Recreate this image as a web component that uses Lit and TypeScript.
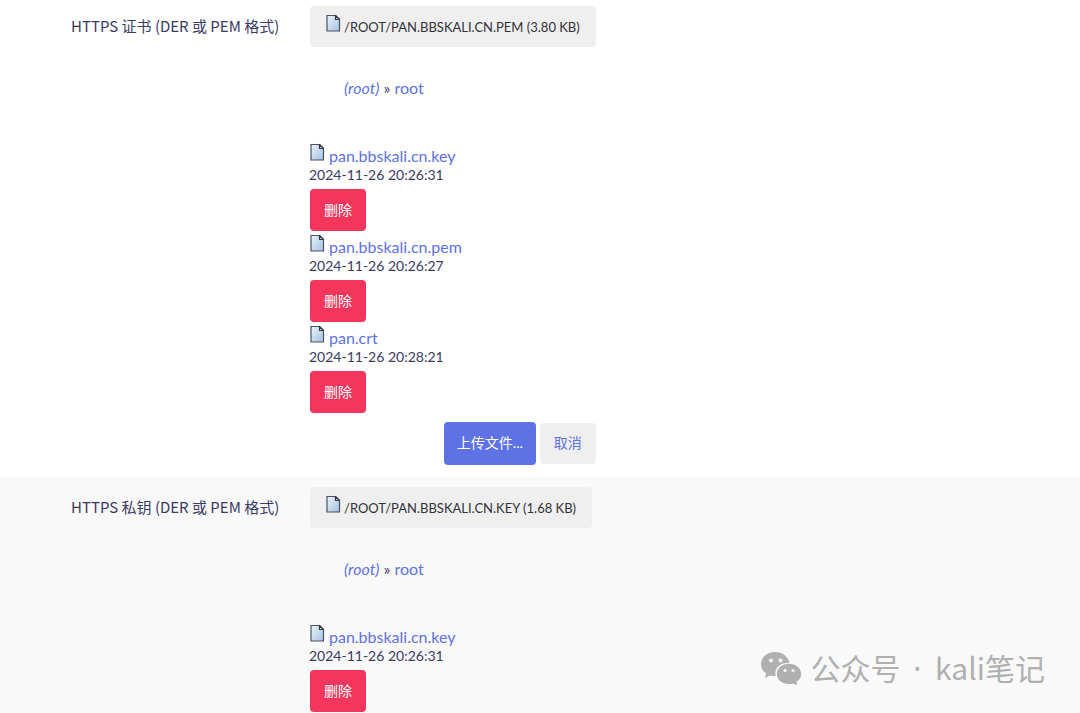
import { LitElement, html, css } from "lit";
import { customElement, property } from "lit/decorators.js";

interface FileEntry {
  name: string;
  date: string;
}

const fileIcon = html`
  <svg class="icon" viewBox="0 0 15 18" width="15" height="18" aria-hidden="true">
    <defs>
      <linearGradient id="paper" x1="0" y1="0" x2="1" y2="1">
        <stop offset="0" stop-color="#eaf3fb" />
        <stop offset="0.5" stop-color="#c8dbee" />
        <stop offset="1" stop-color="#a3bfe2" />
      </linearGradient>
    </defs>
    <path d="M1 1.500H9.500L13.500 5.500V17H1Z" fill="url(#paper)" stroke="#4a535e" stroke-width="1.200" />
    <path d="M9.500 1.500V5.500H13.500Z" fill="#dde6ee" stroke="#323a42" stroke-width="1.200" stroke-linejoin="round" />
  </svg>
`;

@customElement("file-field")
export class FileField extends LitElement {
  @property() label = "";
  @property() selected = "";
  @property({ attribute: false }) files: FileEntry[] = [];
  @property({ type: Boolean }) upload = false;

  static styles = css`
    :host {
      display: grid;
      grid-template-columns: 238px minmax(0, 1fr);
      padding: 10px 20px 12px 71px;
      color: #3a3a63;
      font-size: 14px;
      line-height: 18px;
    }
    .label {
      padding-top: 11px;
      font-family: "Noto Sans CJK SC", sans-serif;
      font-size: 15px;
    }
    .browser {
      width: fit-content;
    }
    button {
      font: inherit;
      font-size: 14px;
      line-height: 19px;
      border: 0;
      border-radius: 4px;
      padding: 11px 14px 12px;
      cursor: pointer;
    }
    .icon {
      display: block;
      flex: none;
    }
    .current {
      display: flex;
      align-items: flex-start;
      gap: 3px;
      height: 41px;
      margin-left: 1px;
      padding: 8px 16px 0;
      background: #efefef;
      color: #32323a;
      font-size: 13px;
      text-transform: uppercase;
      line-height: 26px;
    }
    .path {
      margin: 32px 0 46px 35px;
      font-size: 16px;
    }
    a {
      color: #5e72e4;
      text-decoration: none;
      font-size: 16px;
    }
    ul {
      list-style: none;
      margin: 0;
      padding: 0;
    }
    li {
      height: 91px;
    }
    .name {
      display: flex;
      align-items: flex-start;
      gap: 4px;
      height: 23px;
      margin-left: 1px;
      line-height: 25px;
    }
    time {
      display: block;
    }
    .delete {
      margin: 5px 0 0 1px;
      background: #f5365c;
      color: #fff;
    }
    .actions {
      display: flex;
      justify-content: flex-end;
      align-items: center;
      gap: 4px;
      margin-top: 6px;
    }
    .primary {
      padding: 11px 13px 13px;
      background: #5e72e4;
      color: #fff;
    }
    .cancel {
      padding: 10px 14px 12px;
      background: #efefef;
      color: #5e72e4;
    }
  `;

  render() {
    return html`
      <label class="label" for="current">${this.label}</label>
      <div class="browser">
        <button class="current" id="current" type="button">
          ${fileIcon}<span>${this.selected}</span>
        </button>
        <nav class="path"><a href="#"><em>(root)</em></a> » <a href="#">root</a></nav>
        <ul>
          ${this.files.map(
            (file) => html`
              <li>
                <div class="name">${fileIcon}<a href="#">${file.name}</a></div>
                <time>${file.date}</time>
                <button class="delete" type="button">删除</button>
              </li>
            `
          )}
        </ul>
        ${this.upload
          ? html`<div class="actions">
              <button class="primary" type="button">上传文件...</button>
              <button class="cancel" type="button">取消</button>
            </div>`
          : null}
      </div>
    `;
  }
}

@customElement("app-root")
export class AppRoot extends LitElement {
  static styles = css`
    :host {
      display: block;
      position: relative;
      height: 100vh;
      overflow: hidden;
      background: #fff;
      font-family: Lato, "Noto Sans CJK SC", sans-serif;
    }
    .first {
      padding-top: 6px;
    }
    .alternate {
      min-height: 100vh;
      background: #f9f9f9;
      grid-template-rows: max-content;
    }
    .watermark {
      position: absolute;
      right: 35px;
      bottom: 23px;
      display: flex;
      align-items: center;
      gap: 8px;
      color: #b0b0b0;
      font-family: "Noto Sans CJK SC", sans-serif;
      font-size: 30px;
      line-height: 42px;
    }
    .dot {
      margin: 0 6px 0 5px;
      font-family: "Noto Sans", sans-serif;
    }
  `;

  private certificates: FileEntry[] = [
    { name: "pan.bbskali.cn.key", date: "2024-11-26 20:26:31" },
    { name: "pan.bbskali.cn.pem", date: "2024-11-26 20:26:27" },
    { name: "pan.crt", date: "2024-11-26 20:28:21" },
  ];

  render() {
    return html`
      <file-field
        class="first"
        label="HTTPS 证书 (DER 或 PEM 格式)"
        selected="/root/pan.bbskali.cn.pem (3.80 KB)"
        .files=${this.certificates}
        upload
      ></file-field>
      <file-field
        class="alternate"
        label="HTTPS 私钥 (DER 或 PEM 格式)"
        selected="/root/pan.bbskali.cn.key (1.68 KB)"
        .files=${this.certificates.slice(0, 1)}
      ></file-field>
      <div class="watermark">
        <svg viewBox="0 0 42 34" width="42" height="34" fill="#b0b0b0" aria-hidden="true">
          <path d="M15 1C6.800 1 1 6.400 1 13c0 4 2 7.300 5.300 9.500L5 27l5-2.600c1.800.5 3.600.8 5.700.7A11.500 11.500 0 0 1 15.400 22C15.400 16 21 11.500 29.500 11.800 28.200 5.600 22.500 1 15 1Z" />
          <path d="M29 12.800c-7 0-12.200 4.500-12.200 10.200S22 33 29 33c1.600 0 3-.2 4.300-.6l4.200 2.100-1.100-3.600c2.900-1.900 4.800-4.700 4.800-7.900 0-5.700-5.200-10.200-12.200-10.200Z" />
          <g fill="#f9f9f9">
            <circle cx="11" cy="9.500" r="1.900" />
            <circle cx="20.500" cy="9.500" r="1.900" />
            <circle cx="25" cy="19.500" r="1.600" />
            <circle cx="33" cy="19.500" r="1.600" />
          </g>
        </svg>
        <span>公众号<span class="dot"> · </span>kali笔记</span>
      </div>
    `;
  }
}
